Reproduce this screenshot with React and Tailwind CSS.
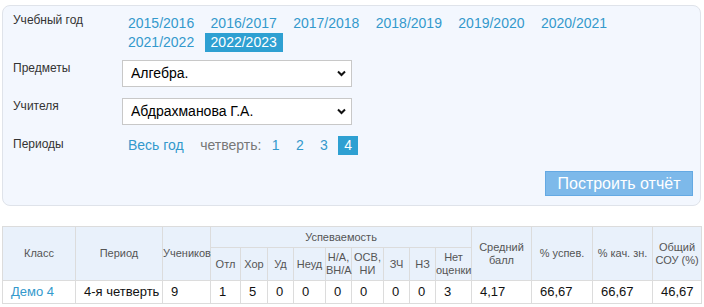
import { useState } from 'react';

const years = ['2015/2016', '2016/2017', '2017/2018', '2018/2019', '2019/2020', '2020/2021', '2021/2022', '2022/2023'];
const cols = [73, 87, 48, 30, 27, 26, 32, 26, 32, 26, 26, 36, 60, 61, 60, 49];

function Chevron() {
  return (
    <svg className="pointer-events-none absolute right-[6px] top-[10px]" width="9" height="7" viewBox="0 0 9 7">
      <path d="M1 1.5 L4.5 5 L8 1.5" fill="none" stroke="#111" strokeWidth="2" />
    </svg>
  );
}

function Select({ value }) {
  return (
    <div className="relative w-[230px] h-[27px]">
      <select
        defaultValue={value}
        className="appearance-none w-full h-full border border-[#c8c8c8] bg-white pl-[8px] text-[14px] text-black outline-none"
      >
        <option>{value}</option>
      </select>
      <Chevron />
    </div>
  );
}

export default function App() {
  const [year, setYear] = useState('2022/2023');
  const [period, setPeriod] = useState('4');

  const th = 'border border-[#dcdcdc] bg-[#e9f1fb] text-[#555] font-normal text-[11px] leading-[13px] text-center align-middle px-0 whitespace-nowrap';
  const td = 'border border-[#dcdcdc] text-[13px] text-[#111] text-left pl-[8px] align-middle whitespace-nowrap';

  return (
    <div className="min-h-screen bg-white pt-[5px] pl-[2px] font-['Liberation_Sans',Arial,sans-serif]">
      <div className="w-[699px] rounded-[8px] border border-[#dfe3ea] bg-[#f3f7fe] pl-[10px] pr-[7px] pt-[6px] pb-[9px]">
        <div className="flex">
          <div className="w-[109px] text-[12px] leading-[16px] text-[#333]">Учебный год</div>
          <div className="mt-[2px] flex w-[540px] flex-wrap gap-x-[4.4px]">
            {years.map((y) => (
              <span
                key={y}
                onClick={() => setYear(y)}
                className={
                  'h-[19px] px-[6px] text-[14px] leading-[19px] cursor-pointer ' +
                  (y === year ? 'bg-[#2ea0d2] text-white' : 'text-[#3399cc]')
                }
              >
                {y}
              </span>
            ))}
          </div>
        </div>

        <div className="mt-[8px] flex">
          <div className="w-[109px] text-[12px] leading-[16px] text-[#333]">Предметы</div>
          <Select value="Алгебра." />
        </div>

        <div className="mt-[11px] flex">
          <div className="w-[109px] text-[12px] leading-[16px] text-[#333]">Учителя</div>
          <Select value="Абдрахманова Г.А." />
        </div>

        <div className="mt-[11px] flex">
          <div className="w-[109px] text-[12px] leading-[16px] text-[#333]">Периоды</div>
          <div className="flex gap-x-[4.4px] text-[14px] leading-[19px]">
            <span
              onClick={() => setPeriod('year')}
              className={'h-[19px] px-[6px] cursor-pointer ' + (period === 'year' ? 'bg-[#2ea0d2] text-white' : 'text-[#3399cc]')}
            >
              Весь год
            </span>
            <span className="ml-[6px] text-[#777]">четверть:</span>
            {['1', '2', '3', '4'].map((p) => (
              <span
                key={p}
                onClick={() => setPeriod(p)}
                className={'h-[19px] px-[6px] cursor-pointer ' + (period === p ? 'bg-[#2ea0d2] text-white' : 'text-[#3399cc]')}
              >
                {p}
              </span>
            ))}
          </div>
        </div>

        <div className="mt-[16px] flex justify-end">
          <button className="h-[25px] w-[148px] border border-[#64a9e3] bg-[#7db9ea] text-[16px] leading-[23px] text-white">
            Построить отчёт
          </button>
        </div>
      </div>

      <table className="mt-[20px] w-[699px] table-fixed border-collapse border border-[#dcdcdc]">
        <colgroup>
          {cols.map((w, i) => (
            <col key={i} style={{ width: w }} />
          ))}
        </colgroup>
        <thead>
          <tr className="h-[21px]">
            <th rowSpan={2} className={th}>Класс</th>
            <th rowSpan={2} className={th}>Период</th>
            <th rowSpan={2} className={th}>Учеников</th>
            <th colSpan={9} className={th}>Успеваемость</th>
            <th rowSpan={2} className={th}>Средний<br />балл</th>
            <th rowSpan={2} className={th}>% успев.</th>
            <th rowSpan={2} className={th}>% кач. зн.</th>
            <th rowSpan={2} className={th}>Общий<br />СОУ (%)</th>
          </tr>
          <tr className="h-[33px]">
            <th className={th}>Отл</th>
            <th className={th}>Хор</th>
            <th className={th}>Уд</th>
            <th className={th}>Неуд</th>
            <th className={th}>Н/А,<br />ВН/А</th>
            <th className={th}>ОСВ,<br />НИ</th>
            <th className={th}>ЗЧ</th>
            <th className={th}>НЗ</th>
            <th className={th}>Нет<br />оценки</th>
          </tr>
        </thead>
        <tbody>
          <tr className="h-[23px]">
            <td className={td + ' text-[#3399cc]'}>Демо 4</td>
            <td className={td}>4-я четверть</td>
            <td className={td}>9</td>
            <td className={td}>1</td>
            <td className={td}>5</td>
            <td className={td}>0</td>
            <td className={td}>0</td>
            <td className={td}>0</td>
            <td className={td}>0</td>
            <td className={td}>0</td>
            <td className={td}>0</td>
            <td className={td}>3</td>
            <td className={td}>4,17</td>
            <td className={td}>66,67</td>
            <td className={td}>66,67</td>
            <td className={td}>46,67</td>
          </tr>
        </tbody>
      </table>
    </div>
  );
}
